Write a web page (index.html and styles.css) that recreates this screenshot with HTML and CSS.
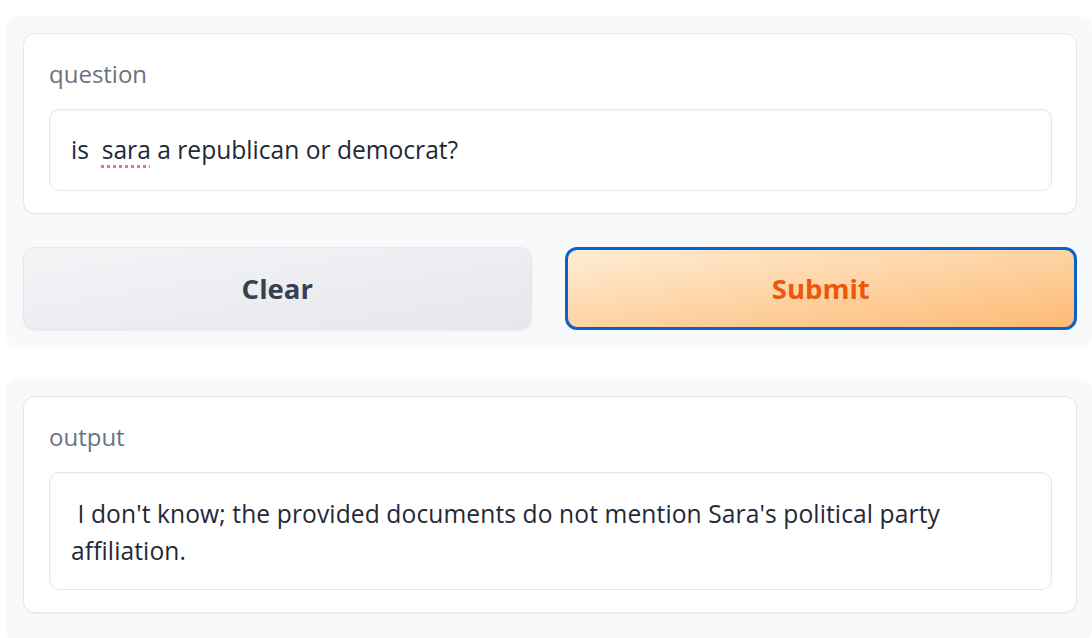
FILE: index.html
```html
<!DOCTYPE html>
<html>
<head>
<meta charset="utf-8">
<link rel="stylesheet" href="styles.css">
</head>
<body>
<div class="page">
  <section class="panel">
    <div class="card">
      <div class="label">question</div>
      <div class="field single">is&nbsp; <span class="spell">sara</span> a republican or democrat?</div>
    </div>
    <div class="buttons">
      <button class="btn secondary">Clear</button>
      <button class="btn primary">Submit</button>
    </div>
  </section>
  <section class="panel panel-out">
    <div class="card">
      <div class="label">output</div>
      <div class="field multi">&nbsp;I don't know; the provided documents do not mention Sara's political party affiliation.</div>
    </div>
  </section>
</div>
</body>
</html>
```
FILE: styles.css
```css
html, body {
  margin: 0;
  padding: 0;
  background: #ffffff;
}
body {
  font-family: "Open Sans", "Lato", sans-serif;
  overflow: hidden;
}
.page {
  padding-top: 16px;
  padding-left: 6px;
  display: flex;
  flex-direction: column;
  gap: 32px;
}
.panel {
  width: 1086px;
  box-sizing: border-box;
  background: #f8f9fb;
  border-radius: 12px;
  padding: 17px 15px 17px 17px;
  display: flex;
  flex-direction: column;
  gap: 33px;
}
.panel-out {
  padding-bottom: 30px;
}
.card {
  background: #ffffff;
  border: 1px solid #e5e7eb;
  border-radius: 12px;
  padding: 25px 24px 22px 25px;
  display: flex;
  flex-direction: column;
  gap: 20px;
  box-shadow: 0 1px 2px rgba(0,0,0,0.04);
}
.label {
  font-size: 24px;
  line-height: 30px;
  color: #6b7280;
}
.field {
  border: 1px solid #e5e7eb;
  border-radius: 10px;
  padding: 22px 21px;
  font-size: 24.6px;
  line-height: 36px;
  color: #1f2937;
  box-shadow: inset 0 1px 3px rgba(0,0,0,0.04);
}
.field.multi {
  padding: 22px 21px 20px 21px;
  line-height: 37px;
  letter-spacing: 0.1px;
}
.spell {
  text-decoration: underline dotted #f87171;
  text-decoration-thickness: 3px;
  text-underline-offset: 6px;
}
.buttons {
  display: flex;
  gap: 33px;
}
.btn {
  flex: 1 1 0;
  min-width: 0;
  padding: 0;
  height: 83px;
  border-radius: 12px;
  font-family: "Open Sans", "Lato", sans-serif;
  font-size: 27.5px;
  font-weight: 700;
  cursor: pointer;
}
.secondary {
  background: linear-gradient(to bottom right, #f3f4f6, #e5e7eb);
  border: 1px solid #e5e7eb;
  color: #374151;
  box-shadow: 0 1px 2px rgba(0,0,0,0.05);
}
.primary {
  background: linear-gradient(to bottom right, #ffedd5, #fdba74);
  border: 3px solid #0b63c9;
  color: #ea580c;
}
```
